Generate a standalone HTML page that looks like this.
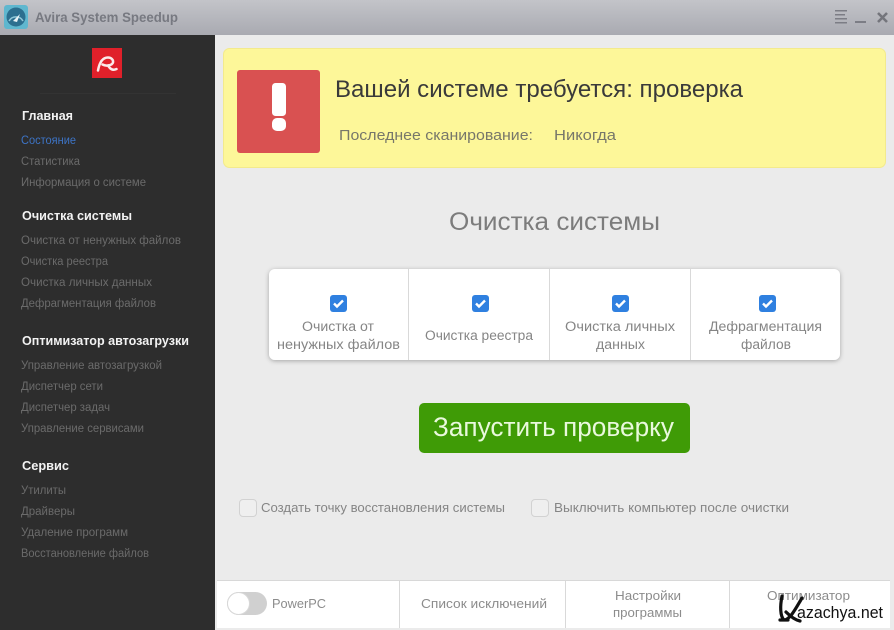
<!DOCTYPE html>
<html><head><meta charset="utf-8"><style>
html,body{margin:0;padding:0;background:#ebebeb;width:894px;height:630px;overflow:hidden}
svg{display:block;position:absolute;left:0;top:0}
text{font-family:"Liberation Sans",sans-serif;white-space:pre}
.n{font-size:11.5px;fill:#6b6b6b}
.b{font-size:12.5px;font-weight:bold;fill:#f2f2f2}
.c{font-size:13.5px;fill:#858585}
.f{font-size:13px;fill:#858585}
.o{font-size:12.5px;fill:#8c8c8c}
</style></head><body>
<svg width="894" height="630" viewBox="0 0 894 630" xmlns="http://www.w3.org/2000/svg">
<defs>
<linearGradient id="tb" x1="0" y1="0" x2="0" y2="1"><stop offset="0" stop-color="#c3c4c9"/><stop offset="1" stop-color="#a9aab1"/></linearGradient>
<filter id="sh" x="-5%" y="-10%" width="110%" height="125%"><feDropShadow dx="0" dy="1" stdDeviation="2.5" flood-color="#000" flood-opacity=".3"/></filter>
</defs>
<rect width="894" height="630" fill="#ebebeb"/>
<rect width="894" height="35" fill="url(#tb)"/>
<rect x="4" y="5" width="24" height="24" rx="3" fill="#5fb7cf"/>
<circle cx="16" cy="17" r="9.5" fill="#2c6f8f"/>
<path d="M9 21a8 8 0 0 1 14 0" fill="none" stroke="#8fc7d8" stroke-width="1.5"/>
<path d="M13 21l7-7-3 8z" fill="#e8f2f5"/>
<text x="35" y="22" font-size="14" font-weight="bold" fill="#777981" textLength="143" lengthAdjust="spacingAndGlyphs">Avira System Speedup</text>
<g fill="#7c7d85">
<rect x="835" y="10" width="12" height="1.5"/><rect x="835" y="14" width="10" height="1.5"/><rect x="835" y="18" width="12" height="1.5"/><rect x="835" y="22" width="12" height="1.5"/>
<rect x="855" y="21" width="11" height="2"/>
</g>
<path d="M878 13l9 9M887 13l-9 9" stroke="#74757c" stroke-width="2.6"/>

<rect x="0" y="35" width="215" height="595" fill="#2d2d2d"/>
<rect x="40" y="93" width="136" height="1" fill="#333"/>
<rect x="92" y="48" width="30" height="30" fill="#e0202a"/>
<path d="M98 70.500C99.500 62 103 57.500 108 57.500C111.500 57.500 113.500 60 113 62.500C112 65.500 106 66.500 102.500 64.500M108 65.500C110 68.500 112 71 116.500 69" fill="none" stroke="#fbeaea" stroke-width="2.500" stroke-linecap="round"/>

<text class="b" x="22" y="120" textLength="51" lengthAdjust="spacingAndGlyphs">Главная</text>
<text class="n" x="21" y="144" style="fill:#3d74c6" textLength="55" lengthAdjust="spacingAndGlyphs">Состояние</text>
<text class="n" x="21" y="165" textLength="59" lengthAdjust="spacingAndGlyphs">Статистика</text>
<text class="n" x="21" y="186" textLength="125" lengthAdjust="spacingAndGlyphs">Информация о системе</text>
<text class="b" x="22" y="220" textLength="110" lengthAdjust="spacingAndGlyphs">Очистка системы</text>
<text class="n" x="21" y="244" textLength="160" lengthAdjust="spacingAndGlyphs">Очистка от ненужных файлов</text>
<text class="n" x="21" y="265" textLength="87" lengthAdjust="spacingAndGlyphs">Очистка реестра</text>
<text class="n" x="21" y="286" textLength="131" lengthAdjust="spacingAndGlyphs">Очистка личных данных</text>
<text class="n" x="21" y="307" textLength="135" lengthAdjust="spacingAndGlyphs">Дефрагментация файлов</text>
<text class="b" x="22" y="345" textLength="167" lengthAdjust="spacingAndGlyphs">Оптимизатор автозагрузки</text>
<text class="n" x="21" y="369" textLength="141" lengthAdjust="spacingAndGlyphs">Управление автозагрузкой</text>
<text class="n" x="21" y="390" textLength="82" lengthAdjust="spacingAndGlyphs">Диспетчер сети</text>
<text class="n" x="21" y="411" textLength="89" lengthAdjust="spacingAndGlyphs">Диспетчер задач</text>
<text class="n" x="21" y="432" textLength="123" lengthAdjust="spacingAndGlyphs">Управление сервисами</text>
<text class="b" x="22" y="470" textLength="47" lengthAdjust="spacingAndGlyphs">Сервис</text>
<text class="n" x="21" y="494" textLength="45" lengthAdjust="spacingAndGlyphs">Утилиты</text>
<text class="n" x="21" y="515" textLength="54" lengthAdjust="spacingAndGlyphs">Драйверы</text>
<text class="n" x="21" y="536" textLength="107" lengthAdjust="spacingAndGlyphs">Удаление программ</text>
<text class="n" x="21" y="557" textLength="128" lengthAdjust="spacingAndGlyphs">Восстановление файлов</text>

<rect x="223.500" y="48.500" width="662" height="119" rx="6" fill="#fdf799" stroke="#f3ea8c"/>
<rect x="237" y="70" width="83" height="83" rx="3" fill="#d95151"/>
<rect x="272" y="83" width="14" height="33" rx="3.500" fill="#fff"/>
<rect x="272" y="118" width="14" height="13" rx="5" fill="#fff"/>
<text x="335" y="97" font-size="24" fill="#3a3a3a" textLength="408" lengthAdjust="spacingAndGlyphs">Вашей системе требуется: проверка</text>
<text x="339" y="140" font-size="15" fill="#77776a" textLength="194" lengthAdjust="spacingAndGlyphs">Последнее сканирование:</text>
<text x="554" y="140" font-size="15" fill="#77776a" textLength="62" lengthAdjust="spacingAndGlyphs">Никогда</text>

<text x="449" y="230" font-size="25" fill="#7c7c7c" textLength="211" lengthAdjust="spacingAndGlyphs">Очистка системы</text>

<rect x="269" y="269" width="571" height="91" rx="6" fill="#fff" filter="url(#sh)"/>
<rect x="408" y="269" width="1" height="91" fill="#d9d9d9"/>
<rect x="549" y="269" width="1" height="91" fill="#d9d9d9"/>
<rect x="690" y="269" width="1" height="91" fill="#d9d9d9"/>
<rect x="330" y="295" width="17" height="17" rx="3" fill="#2f80e0"/>
<path d="M334 303.500l3 3 6-6" fill="none" stroke="#fff" stroke-width="2.400"/>
<rect x="472" y="295" width="17" height="17" rx="3" fill="#2f80e0"/>
<path d="M476 303.500l3 3 6-6" fill="none" stroke="#fff" stroke-width="2.400"/>
<rect x="612" y="295" width="17" height="17" rx="3" fill="#2f80e0"/>
<path d="M616 303.500l3 3 6-6" fill="none" stroke="#fff" stroke-width="2.400"/>
<rect x="759" y="295" width="17" height="17" rx="3" fill="#2f80e0"/>
<path d="M763 303.500l3 3 6-6" fill="none" stroke="#fff" stroke-width="2.400"/>
<text class="c" x="302" y="331" textLength="72" lengthAdjust="spacingAndGlyphs">Очистка от</text>
<text class="c" x="277" y="349" textLength="123" lengthAdjust="spacingAndGlyphs">ненужных файлов</text>
<text class="c" x="425" y="340" textLength="108" lengthAdjust="spacingAndGlyphs">Очистка реестра</text>
<text class="c" x="565" y="331" textLength="110" lengthAdjust="spacingAndGlyphs">Очистка личных</text>
<text class="c" x="596" y="349" textLength="49" lengthAdjust="spacingAndGlyphs">данных</text>
<text class="c" x="709" y="331" textLength="113" lengthAdjust="spacingAndGlyphs">Дефрагментация</text>
<text class="c" x="741" y="349" textLength="50" lengthAdjust="spacingAndGlyphs">файлов</text>

<rect x="419" y="403" width="271" height="50" rx="5" fill="#3f9b06"/>
<text x="433" y="436" font-size="27" fill="#e9f9dc" textLength="241" lengthAdjust="spacingAndGlyphs">Запустить проверку</text>

<rect x="239.500" y="499.500" width="17" height="17" rx="3.500" fill="#efefef" stroke="#d2d2d2"/>
<text class="f" x="261" y="512" textLength="244" lengthAdjust="spacingAndGlyphs">Создать точку восстановления системы</text>
<rect x="531.500" y="499.500" width="17" height="17" rx="3.500" fill="#efefef" stroke="#d2d2d2"/>
<text class="f" x="554" y="512" textLength="235" lengthAdjust="spacingAndGlyphs">Выключить компьютер после очистки</text>

<rect x="217" y="580" width="673" height="48" fill="#fff"/>
<rect x="217" y="580" width="673" height="1" fill="#d8d8d8"/>
<rect x="399" y="581" width="1" height="47" fill="#d9d9d9"/>
<rect x="565" y="581" width="1" height="47" fill="#d9d9d9"/>
<rect x="729" y="581" width="1" height="47" fill="#d9d9d9"/>
<rect x="227" y="592" width="40" height="23" rx="11.500" fill="#d0d0d0"/>
<circle cx="238.500" cy="603.500" r="11" fill="#fff" stroke="#d8d8d8"/>
<text class="o" x="272" y="608" textLength="54" lengthAdjust="spacingAndGlyphs">PowerPC</text>
<text class="o" x="421" y="608" textLength="126" lengthAdjust="spacingAndGlyphs">Список исключений</text>
<text class="o" x="615" y="600" textLength="66" lengthAdjust="spacingAndGlyphs">Настройки</text>
<text class="o" x="613" y="617" textLength="69" lengthAdjust="spacingAndGlyphs">программы</text>
<text class="o" x="767" y="600" textLength="83" lengthAdjust="spacingAndGlyphs">Оптимизатор</text>
<path d="M782 596C780 606 780 616 784 620C790 620 796 608 802 598M786 612C790 616 795 620 800 621M780 620h8" fill="none" stroke="#111" stroke-width="3.200" stroke-linecap="round"/>
<text x="797" y="618" font-size="17" fill="#111" textLength="86" lengthAdjust="spacingAndGlyphs">azachya.net</text>
</svg>
</body></html>
